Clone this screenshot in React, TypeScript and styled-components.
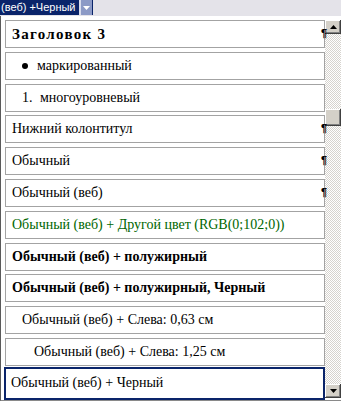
import React from "react";
import styled, { createGlobalStyle } from "styled-components";

const Global = createGlobalStyle`
  html, body { margin: 0; padding: 0; background: #fff; }
  body { width: 341px; height: 401px; overflow: hidden; }
`;

const Frame = styled.div`
  width: 341px;
  height: 401px;
  display: flex;
  flex-direction: column;
  background: #fff;
  overflow: hidden;
`;

const TopBar = styled.div`
  height: 16px;
  flex-shrink: 0;
  background: #e4e3e9;
  display: flex;
  align-items: flex-start;
`;

const Field = styled.div`
  width: 79px;
  height: 15px;
  box-sizing: border-box;
  padding-left: 1px;
  background: #0a246a;
  color: #fff;
  font-family: "Liberation Sans", Arial, sans-serif;
  font-size: 11px;
  line-height: 15px;
  white-space: nowrap;
  overflow: hidden;
`;

const DropBtn = styled.div`
  width: 14px;
  height: 15px;
  box-sizing: border-box;
  background: #8c9ac6;
  border-left: 2px solid #d8dcec;
  border-right: 1px solid #0a246a;
  display: flex;
  align-items: center;
  justify-content: center;
`;

const Popup = styled.div`
  flex: 1;
  min-height: 0;
  display: flex;
  border-left: 1px solid #5a5a5a;
  border-bottom: 1px solid #8a8a8a;
`;

const List = styled.div`
  width: 324px;
  box-sizing: border-box;
  padding: 4px 0 0 4px;
  display: flex;
  flex-direction: column;
  gap: 3.8px;
`;

const Item = styled.div<{
  $indent: number;
  $bold?: boolean;
  $color?: string;
  $selected?: boolean;
  $heading?: boolean;
}>`
  position: relative;
  flex-shrink: 0;
  box-sizing: border-box;
  width: ${(p) => (p.$selected ? 321 : 320)}px;
  height: ${(p) => (p.$selected ? 33 : 28)}px;
  margin-left: ${(p) => (p.$selected ? -1 : 0)}px;
  margin-top: ${(p) => (p.$selected ? -3 : 0)}px;
  border: ${(p) => (p.$selected ? "2px solid #0a246a" : "1px solid #a3a3a3")};
  padding-left: ${(p) => p.$indent}px;
  display: flex;
  align-items: center;
  font-family: "Liberation Serif", "Times New Roman", serif;
  font-size: ${(p) => (p.$heading ? 15 : 14)}px;
  letter-spacing: ${(p) => (p.$heading ? 1.3 : 0)}px;
  font-weight: ${(p) => (p.$bold ? 700 : 400)};
  color: ${(p) => p.$color || "#000"};
  white-space: nowrap;
  background: #fff;
`;

const Bullet = styled.span`
  width: 6px;
  height: 6px;
  border-radius: 50%;
  background: #000;
  margin-right: 9px;
  flex-shrink: 0;
`;

const Num = styled.span`
  width: 18px;
  flex-shrink: 0;
`;

const Mark = styled.span`
  position: absolute;
  right: -3px;
  top: 7px;
  font-family: "Liberation Sans", Arial, sans-serif;
  font-weight: 700;
  font-size: 11px;
  line-height: 11px;
  letter-spacing: 0;
  color: #000;
`;

const ScrollBar = styled.div`
  width: 16px;
  display: flex;
  flex-direction: column;
  padding: 4px 0 2px;
  box-sizing: border-box;
`;

const ScrollBtn = styled.div`
  width: 16px;
  height: 14px;
  flex-shrink: 0;
  box-sizing: border-box;
  background: #d4d0c8;
  box-shadow: inset -1px -1px #404040, inset 1px 1px #fff, inset -2px -2px #808080;
  display: flex;
  align-items: center;
  justify-content: center;
`;

const Track = styled.div`
  flex: 1;
  display: flex;
  flex-direction: column;
  background: repeating-conic-gradient(#d6d3ce 0 25%, #fff 0 50%) 0 0 / 2px 2px;
`;

const Thumb = styled.div<{ $offset: number }>`
  margin-top: ${(p) => p.$offset}px;
  width: 16px;
  height: 17px;
  box-sizing: border-box;
  background: #d4d0c8;
  box-shadow: inset -1px -1px #404040, inset 1px 1px #fff, inset -2px -2px #808080;
`;

const Arrow = ({ up, color = "#000" }: { up?: boolean; color?: string }) => (
  <svg width="7" height="4" viewBox="0 0 7 4">
    <path d={up ? "M3.5 0 L7 4 L0 4 Z" : "M0 0 L7 0 L3.5 4 Z"} fill={color} />
  </svg>
);

type Row = {
  text: string;
  indent: number;
  bold?: boolean;
  heading?: boolean;
  color?: string;
  mark?: boolean;
  bullet?: boolean;
  num?: string;
  selected?: boolean;
};

const rows: Row[] = [
  { text: "Заголовок 3", indent: 6, bold: true, heading: true, mark: true },
  { text: "маркированный", indent: 16, bullet: true },
  { text: "многоуровневый", indent: 16, num: "1." },
  { text: "Нижний колонтитул", indent: 6, mark: true },
  { text: "Обычный", indent: 6, mark: true },
  { text: "Обычный (веб)", indent: 6, mark: true },
  { text: "Обычный (веб) + Другой цвет (RGB(0;102;0))", indent: 6, color: "#006600" },
  { text: "Обычный (веб) + полужирный", indent: 6, bold: true },
  { text: "Обычный (веб) + полужирный, Черный", indent: 6, bold: true },
  { text: "Обычный (веб) + Слева:  0,63 см", indent: 16 },
  { text: "Обычный (веб) + Слева:  1,25 см", indent: 28 },
  { text: "Обычный (веб) + Черный", indent: 5, selected: true },
];

export default function App() {
  return (
    <Frame>
      <Global />
      <TopBar>
        <Field>(веб) +Черный</Field>
        <DropBtn>
          <Arrow color="#fff" />
        </DropBtn>
      </TopBar>
      <Popup>
        <List>
          {rows.map((r, i) => (
            <Item
              key={i}
              $indent={r.indent}
              $bold={r.bold}
              $heading={r.heading}
              $color={r.color}
              $selected={r.selected}
            >
              {r.bullet && <Bullet />}
              {r.num && <Num>{r.num}</Num>}
              {r.text}
              {r.mark && <Mark>¶</Mark>}
            </Item>
          ))}
        </List>
        <ScrollBar>
          <ScrollBtn>
            <Arrow up />
          </ScrollBtn>
          <Track>
            <Thumb $offset={75} />
          </Track>
          <ScrollBtn>
            <Arrow />
          </ScrollBtn>
        </ScrollBar>
      </Popup>
    </Frame>
  );
}
